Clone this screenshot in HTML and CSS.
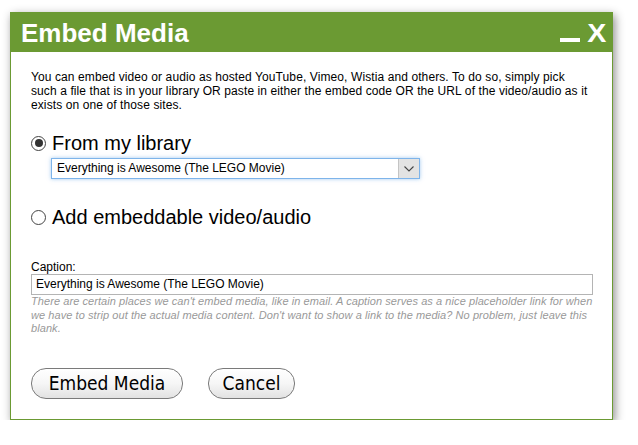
FILE: index.html
```html
<!DOCTYPE html>
<html>
<head>
<meta charset="utf-8">
<link rel="stylesheet" href="styles.css">
</head>
<body>
<div class="dialog">
  <div class="header">
    <div class="title">Embed Media</div>
    <div class="controls">
      <span class="minimize"></span>
      <span class="close">X</span>
    </div>
  </div>
  <div class="content">
    <p class="intro">You can embed video or audio as hosted YouTube, Vimeo, Wistia and others. To do so, simply pick such a file that is in your library OR paste in either the embed code OR the URL of the video/audio as it exists on one of those sites.</p>
    <div class="radio-row first">
      <span class="radio checked"></span>
      <span class="radio-label">From my library</span>
    </div>
    <div class="select">
      <span class="select-text">Everything is Awesome (The LEGO Movie)</span>
      <span class="select-btn">
        <svg width="10" height="6" viewBox="0 0 10 6"><path d="M0.5 0.5 L5 5 L9.5 0.5" fill="none" stroke="#444" stroke-width="1.1"/></svg>
      </span>
    </div>
    <div class="radio-row second">
      <span class="radio"></span>
      <span class="radio-label">Add embeddable video/audio</span>
    </div>
    <div class="caption-label">Caption:</div>
    <div class="caption-input">Everything is Awesome (The LEGO Movie)</div>
    <p class="help">There are certain places we can't embed media, like in email. A caption serves as a nice placeholder link for when we have to strip out the actual media content. Don't want to show a link to the media? No problem, just leave this blank.</p>
    <div class="buttons">
      <span class="btn btn-embed">Embed Media</span>
      <span class="btn btn-cancel">Cancel</span>
    </div>
  </div>
</div>
</body>
</html>
```
FILE: styles.css
```css
html, body {
  margin: 0;
  padding: 0;
  background: #ffffff;
}
body {
  font-family: "Liberation Sans", Arial, sans-serif;
  color: #000;
}
.dialog {
  margin: 12px 0 0 10px;
  width: 603px;
  box-sizing: border-box;
  background: #fff;
  border: 1px solid #6b9a33;
  border-top: none;
  box-shadow: 2px 3px 9px rgba(0,0,0,0.45);
}
.header {
  height: 40px;
  background: #6b9a33;
  margin: 0 -1px;
  display: flex;
  align-items: center;
  justify-content: space-between;
  padding: 0 8px 0 11px;
}
.title {
  color: #fff;
  font-weight: bold;
  font-size: 26px;
  line-height: 30px;
  padding-top: 2px;
}
.controls {
  display: flex;
  align-items: flex-end;
  gap: 8px;
  height: 30px;
}
.minimize {
  display: block;
  width: 20px;
  height: 4px;
  background: #fff;
  margin-bottom: 5px;
}
.close {
  color: #fff;
  font-weight: bold;
  font-size: 26px;
  line-height: 26px;
  transform: scaleX(1.1);
  margin-bottom: 1px;
}
.content {
  padding: 18px 19px 20px 20px;
}
.intro {
  margin: 0;
  font-size: 12px;
  line-height: 14px;
  letter-spacing: 0.1px;
  width: 558px;
}
.radio-row {
  display: flex;
  align-items: center;
  height: 24px;
}
.radio-row.first {
  margin-top: 19px;
}
.radio-row.second {
  margin-top: 26px;
}
.radio {
  width: 13px;
  height: 13px;
  border: 1px solid #444;
  border-radius: 50%;
  background: #fff;
  margin-right: 6px;
  display: flex;
  align-items: center;
  justify-content: center;
  flex: none;
}
.radio.checked::after {
  content: "";
  width: 8px;
  height: 8px;
  border-radius: 50%;
  background: #333;
}
.radio-label {
  font-size: 20px;
  line-height: 24px;
}
.select {
  margin: 3px 0 0 20px;
  width: 369px;
  height: 21px;
  box-sizing: border-box;
  border: 1px solid #7eb4ea;
  box-shadow: 0 0 4px rgba(126,180,234,0.7);
  display: flex;
  align-items: stretch;
  justify-content: space-between;
}
.select-text {
  font-size: 12px;
  line-height: 19px;
  padding-left: 5px;
}
.select-btn {
  width: 20px;
  background: #e3e3e3;
  border-left: 1px solid #c4c4c4;
  display: flex;
  align-items: center;
  justify-content: center;
}
.caption-label {
  margin-top: 31px;
  font-size: 12px;
  line-height: 14px;
}
.caption-input {
  width: 562px;
  height: 21px;
  box-sizing: border-box;
  border: 1px solid #b4b4b4;
  font-size: 12px;
  line-height: 19px;
  padding-left: 4px;
}
.help {
  margin: 0;
  font-size: 11px;
  line-height: 13.5px;
  letter-spacing: 0.07px;
  font-style: italic;
  color: #999;
  width: 566px;
}
.buttons {
  margin-top: 32px;
  display: flex;
  align-items: center;
  gap: 25px;
}
.btn {
  display: inline-flex;
  align-items: center;
  justify-content: center;
  height: 31px;
  box-sizing: border-box;
  border: 1px solid #7a7a7a;
  border-radius: 15px;
  background: linear-gradient(#ffffff 0%, #f6f6f6 50%, #e2e2e2 100%);
  font-family: "DejaVu Sans Condensed", "DejaVu Sans", sans-serif;
  font-size: 19px;
  color: #000;
  padding-bottom: 1px;
}
.btn-embed {
  width: 152px;
}
.btn-cancel {
  width: 87px;
}
```
